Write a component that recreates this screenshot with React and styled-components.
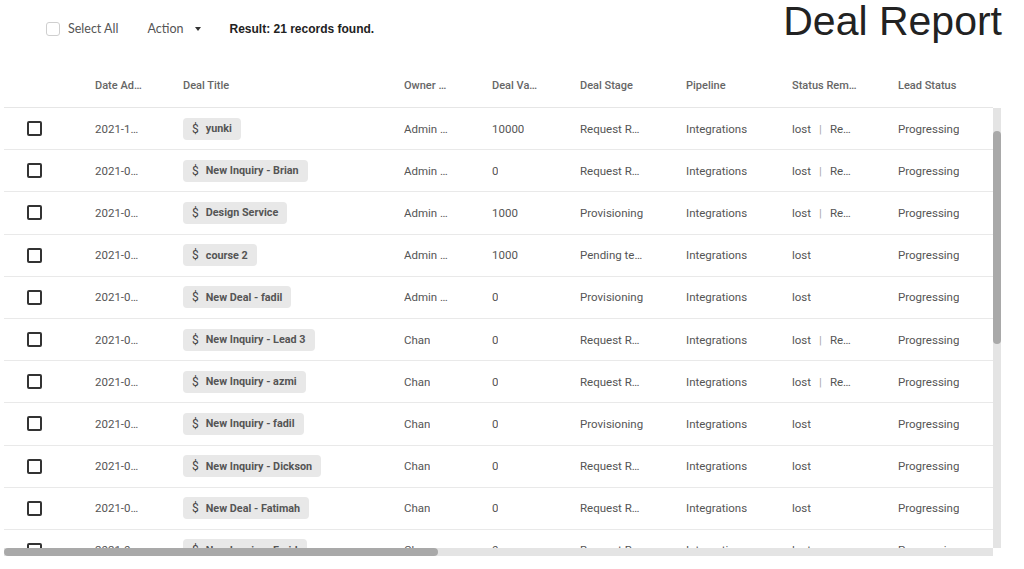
import React from 'react';
import styled, { createGlobalStyle } from 'styled-components';

const deals = [
  { id: 1, date: '2021-10-05', title: 'yunki', owner: 'Admin User', value: '10000', stage: 'Request Received', pipeline: 'Integrations', status: 'lost', remark: 'Requested quotation', lead: 'Progressing' },
  { id: 2, date: '2021-09-28', title: 'New Inquiry - Brian', owner: 'Admin User', value: '0', stage: 'Request Received', pipeline: 'Integrations', status: 'lost', remark: 'Requested quotation', lead: 'Progressing' },
  { id: 3, date: '2021-09-27', title: 'Design Service', owner: 'Admin User', value: '1000', stage: 'Provisioning', pipeline: 'Integrations', status: 'lost', remark: 'Requested demo', lead: 'Progressing' },
  { id: 4, date: '2021-09-24', title: 'course 2', owner: 'Admin User', value: '1000', stage: 'Pending technical review', pipeline: 'Integrations', status: 'lost', remark: '', lead: 'Progressing' },
  { id: 5, date: '2021-09-22', title: 'New Deal - fadil', owner: 'Admin User', value: '0', stage: 'Provisioning', pipeline: 'Integrations', status: 'lost', remark: '', lead: 'Progressing' },
  { id: 6, date: '2021-09-20', title: 'New Inquiry - Lead 3', owner: 'Chan', value: '0', stage: 'Request Received', pipeline: 'Integrations', status: 'lost', remark: 'Requested quotation', lead: 'Progressing' },
  { id: 7, date: '2021-09-17', title: 'New Inquiry - azmi', owner: 'Chan', value: '0', stage: 'Request Received', pipeline: 'Integrations', status: 'lost', remark: 'Requested quotation', lead: 'Progressing' },
  { id: 8, date: '2021-09-15', title: 'New Inquiry - fadil', owner: 'Chan', value: '0', stage: 'Provisioning', pipeline: 'Integrations', status: 'lost', remark: '', lead: 'Progressing' },
  { id: 9, date: '2021-09-13', title: 'New Inquiry - Dickson', owner: 'Chan', value: '0', stage: 'Request Received', pipeline: 'Integrations', status: 'lost', remark: '', lead: 'Progressing' },
  { id: 10, date: '2021-09-10', title: 'New Deal - Fatimah', owner: 'Chan', value: '0', stage: 'Request Received', pipeline: 'Integrations', status: 'lost', remark: '', lead: 'Progressing' },
  { id: 11, date: '2021-09-08', title: 'New Inquiry - Farid', owner: 'Chan', value: '0', stage: 'Request Received', pipeline: 'Integrations', status: 'lost', remark: '', lead: 'Progressing' },
];

// label + room left for text inside each column (ellipsis beyond that)
const columns = [
  { label: 'Date Added', room: 48 },
  { label: 'Deal Title', room: 189 },
  { label: 'Owner Name', room: 48 },
  { label: 'Deal Value', room: 46 },
  { label: 'Deal Stage', room: 64 },
  { label: 'Pipeline', room: 66 },
  { label: 'Status Remark', room: 66 },
  { label: 'Lead Status', room: 66 },
];

const GRID = '75px 88px 221px 88px 88px 106px 106px 106px 106px';

const App = () => {
  const room = (i) => columns[i].room;
  return (
    <Page>
      <GlobalStyle />
      <Toolbar>
        <ToolGroup>
          <SelectAll>
            <SmallBox />
            Select All
          </SelectAll>
          <ActionMenu>
            Action
            <Caret />
          </ActionMenu>
          <ResultText>Result: 21 records found.</ResultText>
        </ToolGroup>
        <PageTitle>Deal Report</PageTitle>
      </Toolbar>

      <TableArea>
        <HeaderRow>
          <span />
          {columns.map((c) => (
            <HeadCell key={c.label}>
              <Clip $room={c.room}>{c.label}</Clip>
            </HeadCell>
          ))}
        </HeaderRow>

        <BodyWrap>
          <Viewport>
            {deals.map((d) => (
              <Row key={d.id}>
                <CheckCell>
                  <RowBox />
                </CheckCell>
                <Cell><Clip $room={room(0)}>{d.date}</Clip></Cell>
                <Cell>
                  <Chip>
                    <Dollar>$</Dollar>
                    {d.title}
                  </Chip>
                </Cell>
                <Cell><Clip $room={room(2)}>{d.owner}</Clip></Cell>
                <Cell><Clip $room={room(3)}>{d.value}</Clip></Cell>
                <Cell><Clip $room={room(4)}>{d.stage}</Clip></Cell>
                <Cell><Clip $room={room(5)}>{d.pipeline}</Clip></Cell>
                <Cell>
                  <StatusLine $room={room(6)}>
                    <span>{d.status}</span>
                    {d.remark && (
                      <>
                        <Divider>|</Divider>
                        <Remark>{d.remark}</Remark>
                      </>
                    )}
                  </StatusLine>
                </Cell>
                <Cell><Clip $room={room(7)}>{d.lead}</Clip></Cell>
              </Row>
            ))}
          </Viewport>
          <VTrack>
            <VThumb $offset={23} $size={213} />
          </VTrack>
        </BodyWrap>

        <HTrack>
          <HThumb $size={434} />
        </HTrack>
      </TableArea>
    </Page>
  );
};

const GlobalStyle = createGlobalStyle`
  * { box-sizing: border-box; }
  body {
    margin: 0;
    background: #fff;
    font-family: Roboto, "Liberation Sans", sans-serif;
  }
`;

const Page = styled.div`
  width: 1024px;
  height: 569px;
  overflow: hidden;
  background: #fff;
`;

const Toolbar = styled.div`
  display: flex;
  justify-content: space-between;
  height: 60px;
  padding: 0 22px 0 46px;
`;

const ToolGroup = styled.div`
  display: flex;
  align-items: center;
  padding-bottom: 3px;
`;

const SelectAll = styled.label`
  display: flex;
  align-items: center;
  gap: 8px;
  font-family: Lato, "Liberation Sans", sans-serif;
  font-size: 12.5px;
  color: #555;
`;

const SmallBox = styled.span`
  width: 14px;
  height: 14px;
  border: 1px solid #cfcfcf;
  border-radius: 3px;
  background: #fff;
`;

const ActionMenu = styled.div`
  display: flex;
  align-items: center;
  gap: 11px;
  margin-left: 29px;
  font-family: Lato, "Liberation Sans", sans-serif;
  font-size: 12.5px;
  color: #555;
`;

const Caret = styled.span`
  width: 0;
  height: 0;
  border-left: 3.5px solid transparent;
  border-right: 3.5px solid transparent;
  border-top: 4px solid #333;
`;

const ResultText = styled.span`
  margin-left: 29px;
  font-family: "Liberation Sans", Arial, sans-serif;
  font-size: 12px;
  font-weight: 700;
  color: #222;
`;

const PageTitle = styled.h1`
  margin: 0;
  font-family: "Liberation Sans", Arial, sans-serif;
  font-size: 41px;
  line-height: 42px;
  font-weight: 400;
  color: #222;
`;

const TableArea = styled.div`
  margin-left: 4px;
  width: 997px;
`;

const HeaderRow = styled.div`
  display: grid;
  grid-template-columns: ${GRID};
  align-items: center;
  width: 989px;
  height: 48px;
  padding-top: 4px;
  border-bottom: 1px solid #e6e6e6;
`;

const HeadCell = styled.div`
  padding-left: 16px;
  font-size: 11px;
  font-weight: 500;
  color: #666;
`;

const Clip = styled.div`
  max-width: ${(p) => p.$room}px;
  white-space: nowrap;
  overflow: hidden;
  text-overflow: ellipsis;
`;

const BodyWrap = styled.div`
  display: flex;
  height: 440px;
`;

const Viewport = styled.div`
  flex: 1;
  overflow: hidden;
`;

const Row = styled.div`
  display: grid;
  grid-template-columns: ${GRID};
  align-items: center;
  height: 42.2px;
  border-bottom: 1px solid #e9e9e9;
  background: #fff;
`;

const Cell = styled.div`
  display: flex;
  padding-left: 16px;
  font-size: 11.5px;
  color: #555;
  min-width: 0;
`;

const CheckCell = styled.div`
  display: flex;
  padding-left: 23px;
`;

const RowBox = styled.span`
  width: 15px;
  height: 15px;
  border: 2px solid #333;
  border-radius: 2px;
`;

const Chip = styled.span`
  display: inline-flex;
  align-items: center;
  gap: 7px;
  height: 22px;
  padding: 0 9px;
  border-radius: 4px;
  background: #e8e8e8;
  font-size: 10.8px;
  font-weight: 700;
  color: #555;
  white-space: nowrap;
`;

const Dollar = styled.span`
  font-size: 12px;
  font-weight: 400;
  color: #444;
`;

const StatusLine = styled.div`
  display: flex;
  align-items: center;
  max-width: ${(p) => p.$room}px;
  white-space: nowrap;
  overflow: hidden;
`;

const Divider = styled.span`
  margin: 0 8px;
  color: #aaa;
`;

const Remark = styled.span`
  max-width: 25px;
  overflow: hidden;
  text-overflow: ellipsis;
`;

const VTrack = styled.div`
  width: 8px;
  background: #e4e4e4;
`;

const VThumb = styled.div`
  margin-top: ${(p) => p.$offset}px;
  height: ${(p) => p.$size}px;
  border-radius: 4px;
  background: #a9a9a9;
`;

const HTrack = styled.div`
  width: 989px;
  height: 8px;
  background: #e4e4e4;
`;

const HThumb = styled.div`
  width: ${(p) => p.$size}px;
  height: 100%;
  border-radius: 4px;
  background: #a9a9a9;
`;

export default App;
